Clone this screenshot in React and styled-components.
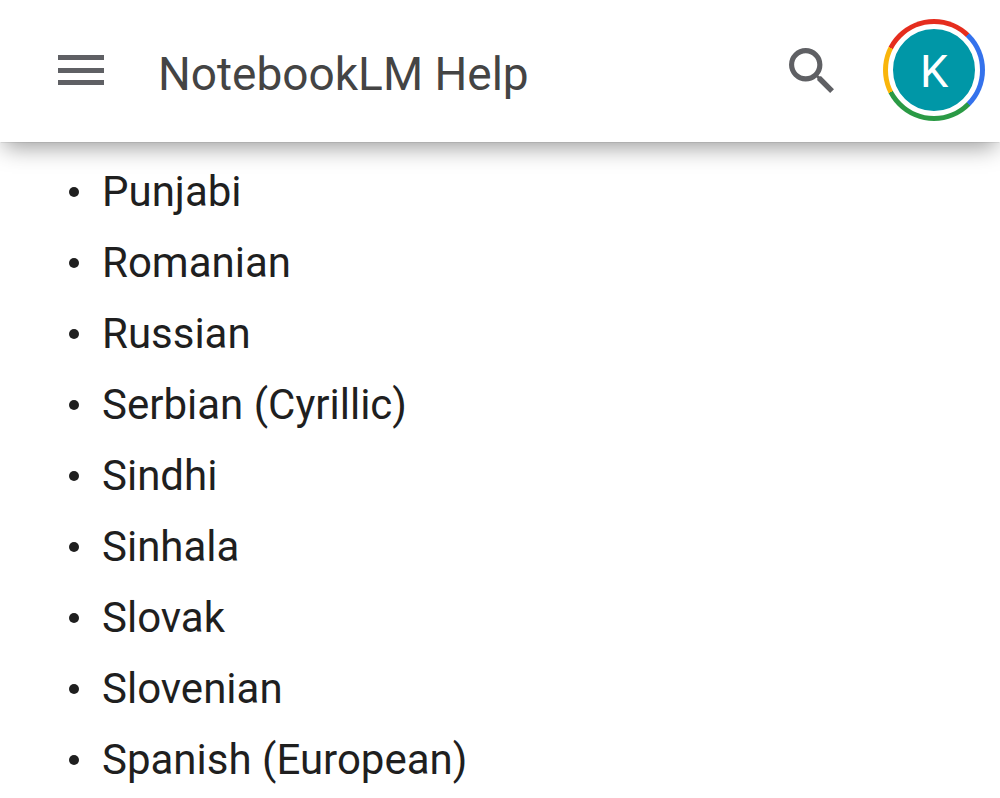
import React from 'react';
import styled, { createGlobalStyle } from 'styled-components';

const GlobalStyle = createGlobalStyle`
  * {
    box-sizing: border-box;
  }

  body {
    margin: 0;
    background: #fff;
    color: #1f1f1f;
    font-family: Roboto, "Noto Sans", sans-serif;
  }
`;

const Header = styled.header`
  display: flex;
  align-items: center;
  padding: 19px 15px 21px 56px;
  background: #fff;
  box-shadow:
    0 1px 1px -1px rgba(0, 0, 0, 0.4),
    0 9px 22px -4px rgba(0, 0, 0, 0.4);
`;

const IconButton = styled.button`
  display: flex;
  padding: 0;
  border: 0;
  background: none;
  color: #5f6064;
  cursor: pointer;
`;

const Title = styled.h1`
  flex: 1;
  margin: 0 0 0 52px;
  padding-top: 8px;
  color: #444;
  font-size: 46px;
  font-weight: 400;
  line-height: 56px;
`;

const Account = styled.button`
  display: grid;
  place-items: center;
  width: 102px;
  height: 102px;
  margin-left: 49px;
  padding: 5px;
  border: 0;
  border-radius: 50%;
  /* red, blue, green and yellow arcs, clockwise from the upper left */
  background: conic-gradient(
    from -63deg,
    #e52d1e 0 107deg,
    #3472ec 107deg 198deg,
    #2a9a45 198deg 306deg,
    #f9b50b 306deg
  );
  cursor: pointer;
`;

const Avatar = styled.span`
  display: grid;
  place-items: center;
  width: 92px;
  height: 92px;
  padding-top: 4px;
  border: 5px solid #fff;
  border-radius: 50%;
  background: #0097a7;
  color: #fff;
  font-family: Roboto, "Noto Sans", sans-serif;
  font-size: 45px;
  line-height: 56px;
`;

const Languages = styled.ul`
  margin: 0;
  padding: 22px 16px 0 102px;
`;

const Language = styled.li`
  position: relative;
  margin-bottom: 15px;
  list-style: none;
  font-size: 42px;
  line-height: 56px;

  &:last-child {
    margin-bottom: 0;
  }

  &::before {
    content: '';
    position: absolute;
    left: -33px;
    top: 23px;
    width: 10px;
    height: 10px;
    border-radius: 50%;
    background: #1f1f1f;
  }
`;

const languages = [
  'Punjabi',
  'Romanian',
  'Russian',
  'Serbian (Cyrillic)',
  'Sindhi',
  'Sinhala',
  'Slovak',
  'Slovenian',
  'Spanish (European)',
];

const App = () => {
  return (
    <>
      <GlobalStyle />
      <Header>
        <IconButton type="button" aria-label="Main menu">
          <svg width="50" height="36" viewBox="0 0 50 36" fill="currentColor">
            <path d="M2 3h46v5H2zM2 16h46v5H2zM2 28h46v5H2z" />
          </svg>
        </IconButton>
        <Title>NotebookLM Help</Title>
        <IconButton type="button" aria-label="Search">
          <svg width="45" height="45" viewBox="3 3 17.5 17.5" fill="currentColor">
            <path d="M15.5 14h-.79l-.28-.27A6.47 6.47 0 0 0 16 9.5 6.5 6.5 0 1 0 9.5 16c1.61 0 3.09-.59 4.23-1.57l.27.28v.79l5 4.99L20.49 19l-4.99-5zm-6 0C7.01 14 5 11.99 5 9.5S7.01 5 9.5 5 14 7.01 14 9.5 11.99 14 9.5 14z" />
          </svg>
        </IconButton>
        <Account type="button" aria-label="Account">
          <Avatar>K</Avatar>
        </Account>
      </Header>
      <main>
        <Languages>
          {languages.map((name) => (
            <Language key={name}>{name}</Language>
          ))}
        </Languages>
      </main>
    </>
  );
};

export default App;
